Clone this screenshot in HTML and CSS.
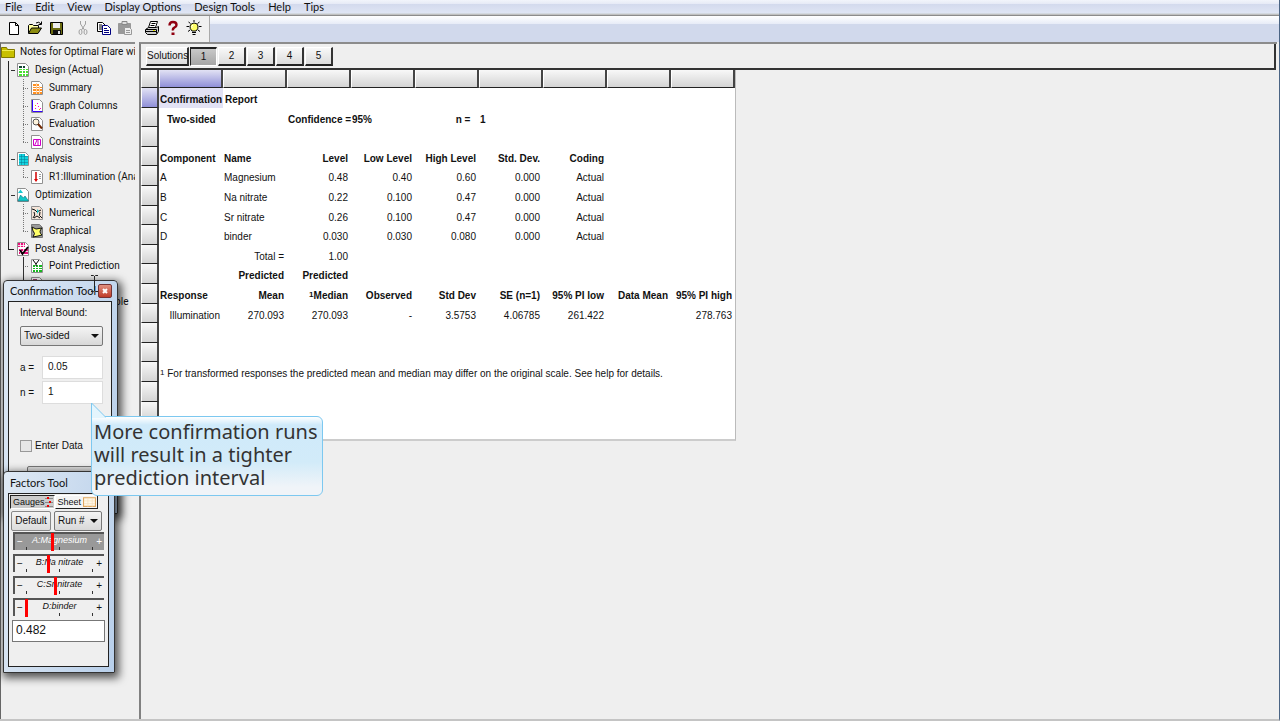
FILE: index.html
```html
<!DOCTYPE html>
<html lang="en">
    <head>
        <meta charset="utf-8">
        <title>Confirmation Report</title>
        <link rel="stylesheet" href="styles.css">
    </head>
    <body>
        <nav class="menu">
            <a href="#">File</a>
            <a href="#">Edit</a>
            <a href="#">View</a>
            <a href="#">Display Options</a>
            <a href="#">Design Tools</a>
            <a href="#">Help</a>
            <a href="#">Tips</a>
        </nav>
        <div class="toolbar">
            <div class="tools">
                <button aria-label="New"><svg viewBox="0 0 16 16"><path d="M3.5 2.500h6l3 3v9h-9zM9.500 2.500v3h3" fill="#fff" stroke="#000"/></svg></button>
                <button aria-label="Open"><svg viewBox="0 0 16 16"><path d="M1.500 13V5.500l1-1h3l1 1h5V8" fill="#ffffa0" stroke="#000"/><path d="M1.500 13.500l3-5.500h10l-3.500 5.500z" fill="#8c8c10" stroke="#000"/><path d="M9 3q3-2 5 1M14.500 1.500v3h-3" fill="none" stroke="#000"/></svg></button>
                <button aria-label="Save"><svg viewBox="0 0 16 16"><path d="M2.500 2.500h12v12h-11l-1-1z" fill="#6b6b10" stroke="#000"/><path d="M5 3h7v5H5z" fill="#eee"/><path d="M5 10h8v4H5z" fill="#111"/><path d="M10 11h2v3h-2z" fill="#ddd"/></svg></button>
                <button class="gap" aria-label="Cut"><svg viewBox="0 0 16 16" fill="none" stroke="#a0a0a0"><path d="M5.500 1v3l4 6M10.500 1v3l-4 6"/><ellipse cx="5.500" cy="12" rx="1.500" ry="2.500"/><ellipse cx="10.500" cy="12" rx="1.500" ry="2.500"/></svg></button>
                <button aria-label="Copy"><svg viewBox="0 0 16 16"><path d="M1.500 2.500h5l3 3v6h-8z" fill="#fff" stroke="#000"/><path d="M3 5h3M3 7h3M3 9h3" stroke="#000"/><path d="M6.500 5.500h5l3 3v6h-8z" fill="#fff" stroke="#000080"/><path d="M8 8.500h3M8 10.500h5M8 12.500h5" stroke="#000080"/></svg></button>
                <button aria-label="Paste"><svg viewBox="0 0 16 16"><path d="M1.500 3.500h12v10h-12z" fill="#999" stroke="#999"/><path d="M5 1.500h5v3H5z" fill="#ddd" stroke="#888"/><path d="M7.500 7.500h5l2 2v5h-7z" fill="#eee" stroke="#999"/><path d="M9 10.500h4M9 12.500h4" stroke="#999"/></svg></button>
                <button class="gap" aria-label="Print"><svg viewBox="0 0 16 16"><path d="M4.500 7.500l2-6h7l-2 6" fill="#fff" stroke="#000"/><path d="M7.500 3.500h4M6.500 5.500h4" stroke="#000"/><path d="M1.500 9.500l3-2h8l2-1v5l-2 3h-9l-2-2z" fill="#ccc" stroke="#000"/><path d="M2 9.500h10.500v4M2 11.500h10" fill="none" stroke="#000"/><path d="M9 10.500h2" stroke="#dd0"/></svg></button>
                <button aria-label="Help"><svg viewBox="0 0 16 16"><path d="M4.500 5.500q0-3.500 3.500-3.500t3.500 3q0 1.500-2 2.500T8 10.500" fill="none" stroke="#900010" stroke-width="2.400"/><path d="M6.500 12.500h3v2.500h-3z" fill="#900010"/></svg></button>
                <button aria-label="Tips"><svg viewBox="0 0 16 16"><path d="M8 0v2M2.500 2l2 1.500M13.500 2l-2 1.500M0.500 6.500h2.500M13 6.500h2.500M2 11.500l2-1.500M14 11.500l-2-1.500" stroke="#000"/><path d="M6 11Q3.500 8.500 4 6t4-3q3.500 0 4 3T10 11z" fill="#ff6" stroke="#000"/><path d="M7 5q-2 1-1 3" fill="none" stroke="#fff"/><path d="M6 12.500h4M6.500 14.500h3" stroke="#000"/></svg></button>
            </div>
        </div>
        <div class="workspace">
            <aside class="sidebar">
                <ul class="tree">
                    <li class="root"><svg viewBox="0 0 14 14"><path d="M.5 2.500h5l1 2h7v8H.5z" fill="#c8c000" stroke="#807800"/><path d="M1 5.500h12" stroke="#f0ec50"/></svg>Notes for Optimal Flare wit</li>
                    <li class="branch"><svg viewBox="0 0 14 14"><path d="M1.500.5h8l3 3v10h-11z" fill="#fff" stroke="#909090"/><path d="M3 3h3v2H3zM7 3h2v2H7z" fill="#143"/><path d="M3 6h3v1H3zM7 6h2v1H7zM10 6h2v1h-2zM3 8h3v2H3zM7 8h2v2H7zM10 8h2v2h-2zM3 11h3v2H3zM7 11h2v2H7zM10 11h2v2h-2z" fill="#48e030"/></svg>Design (Actual)</li>
                    <li class="leaf"><svg viewBox="0 0 14 14"><path d="M1.500.5h8l3 3v10h-11z" fill="#fff" stroke="#909090"/><path d="M3 3h6v2H3zM3 6h9v1H3zM3 8h9v2H3zM3 11h9v2H3z" fill="#ff9022"/><path d="M6.500 2v11M9.500 5v8" stroke="#ffd0a0"/></svg>Summary</li>
                    <li class="leaf"><svg viewBox="0 0 14 14"><path d="M1.500.5h8l3 3v10h-11z" fill="#fff" stroke="#909090"/><path d="M2.500 1v11.500h10" fill="none" stroke="#30f"/><path d="M5 9h1v1H5zM8 7h1v1H8zM7 4h1v1H7zM10 9h1v1h-1z" fill="#f0c"/><path d="M5 6h1v1H5zM9 10h1v1H9z" fill="#f80"/></svg>Graph Columns</li>
                    <li class="leaf"><svg viewBox="0 0 14 14"><path d="M1.500.5h8l3 3v10h-11z" fill="#fff" stroke="#909090"/><circle cx="6" cy="5" r="3" fill="#fff4dd" stroke="#555"/><path d="M8 7l4 4.500" stroke="#702800" stroke-width="2"/></svg>Evaluation</li>
                    <li class="leaf last"><svg viewBox="0 0 14 14"><path d="M1.500.5h8l3 3v10h-11z" fill="#fff" stroke="#909090"/><path d="M3.500 4.500h7v6h-7zM4.500 10.500L7 5M8 10V4.500" fill="none" stroke="#d000c8"/></svg>Constraints</li>
                    <li class="branch"><svg viewBox="0 0 14 14"><path d="M1.500.5h8l3 3v10h-11z" fill="#fff" stroke="#909090"/><path d="M3 2h6v2h3v9H3z" fill="#14d4e0"/><path d="M3 4.500h9M3 7.500h9M3 10.500h9M5.500 2v11M8.500 2v11" stroke="#087890" stroke-width=".5"/></svg>Analysis</li>
                    <li class="leaf last"><svg viewBox="0 0 14 14"><path d="M1.500.5h8l3 3v10h-11z" fill="#fff" stroke="#909090"/><path d="M6 2v8" stroke="#d00000" stroke-width="1.500"/><path d="M4 9h4l-2 3z" fill="#d00"/><path d="M9 4.500h2M9 6.500h2M9 8.500h2" stroke="#999"/></svg>R1:Illumination (Anal</li>
                    <li class="branch"><svg viewBox="0 0 14 14"><path d="M1.500.5h8l3 3v10h-11z" fill="#fff" stroke="#909090"/><path d="M2 13l2.500-6 3 3L9 8l3.500 5z" fill="#10c8c8" stroke="#087080" stroke-width=".6"/><path d="M2 5l2.500-3.500L7 5z" fill="#18c8d0"/></svg>Optimization</li>
                    <li class="leaf"><svg viewBox="0 0 14 14"><path d="M1.500.5h8l3 3v10h-11z" fill="#f4e4d8" stroke="#909090"/><path d="M2 3l3 1 2 2 4-2M3 12q3-3 1-6M12 12q-4-2-2-6M4 12l3-2 3 2" fill="none" stroke="#111"/><path d="M7 3l2 2-2 3z" fill="#18c8d0"/></svg>Numerical</li>
                    <li class="leaf last"><svg viewBox="0 0 14 14"><path d="M1.500.5h8l3 3v10h-11z" fill="#999" stroke="#777"/><path d="M2 3l4 2 6-1q-4 4 0 7l-4 1-5 1q3-4 0-6z" fill="#ffff68" stroke="#111"/></svg>Graphical</li>
                    <li class="branch end"><svg viewBox="0 0 14 14"><path d="M1.500.5h8l3 3v10h-11z" fill="#fff" stroke="#909090"/><path d="M2 1h7v4H2zM3 7h9v5H3z" fill="#e8107c"/><path d="M4.500 1v12M7.500 1v12M2 3.500h10M2 9.500h10" stroke="#fff" stroke-width=".8"/><path d="M4 8l2.500 4L12 5" fill="none" stroke="#000" stroke-width="1.800"/></svg>Post Analysis</li>
                    <li class="leaf solid"><svg viewBox="0 0 14 14"><path d="M1.500.5h8l3 3v10h-11z" fill="#fff" stroke="#909090"/><path d="M3 6h2v2H3zM6 6h2v2H6zM9 6h3v2H9zM3 9h2v1H3zM6 9h2v1H6zM9 9h3v1H9zM3 11h2v2H3zM6 11h2v2H6zM9 11h3v2H9z" fill="#18b820"/><path d="M3 1l3 4 3-4M6 5v2" fill="none" stroke="#000"/></svg>Point Prediction</li>
                    <li class="leaf solid"><svg viewBox="0 0 14 14"><path d="M1.500.5h8l3 3v10h-11z" fill="#fff" stroke="#909090"/><path d="M3 2h4v3H3z" fill="#a04070"/></svg></li>
                    <li class="leaf solid last"><svg viewBox="0 0 14 14"><path d="M1.500.5h8l3 3v10h-11z" fill="#fff" stroke="#909090"/></svg>Coefficients Table</li>
                </ul>
            </aside>
            <main class="report">
                <div class="solutions">
                    <button class="tab wide">Solutions</button>
                    <button class="tab pressed">1</button>
                    <button class="tab">2</button>
                    <button class="tab">3</button>
                    <button class="tab">4</button>
                    <button class="tab">5</button>
                </div>
                <div class="sheet">
                    <table>
                        <colgroup><col class="rowcol"><col span="9"></colgroup>
                        <thead>
                            <tr><th></th><th class="active"></th><th></th><th></th><th></th><th></th><th></th><th></th><th></th><th></th></tr>
                        </thead>
                        <tbody>
                            <tr class="bold"><th class="active"></th><td class="left selected">Confirmation Report</td><td colspan="8"></td></tr>
                            <tr class="bold"><th></th><td class="left indent">Two-sided</td><td></td><td class="left">Confidence =</td><td class="left">95%</td><td>n =&nbsp;&nbsp;</td><td class="left">1</td><td colspan="3"></td></tr>
                            <tr><th></th><td colspan="9"></td></tr>
                            <tr class="bold"><th></th><td class="left">Component</td><td class="left">Name</td><td>Level</td><td>Low Level</td><td>High Level</td><td>Std. Dev.</td><td>Coding</td><td colspan="2"></td></tr>
                            <tr><th></th><td class="left">A</td><td class="left">Magnesium</td><td>0.48</td><td>0.40</td><td>0.60</td><td>0.000</td><td>Actual</td><td colspan="2"></td></tr>
                            <tr><th></th><td class="left">B</td><td class="left">Na nitrate</td><td>0.22</td><td>0.100</td><td>0.47</td><td>0.000</td><td>Actual</td><td colspan="2"></td></tr>
                            <tr><th></th><td class="left">C</td><td class="left">Sr nitrate</td><td>0.26</td><td>0.100</td><td>0.47</td><td>0.000</td><td>Actual</td><td colspan="2"></td></tr>
                            <tr><th></th><td class="left">D</td><td class="left">binder</td><td>0.030</td><td>0.030</td><td>0.080</td><td>0.000</td><td>Actual</td><td colspan="2"></td></tr>
                            <tr><th></th><td></td><td>Total =</td><td>1.00</td><td colspan="6"></td></tr>
                            <tr class="bold"><th></th><td></td><td>Predicted</td><td>Predicted</td><td colspan="6"></td></tr>
                            <tr class="bold"><th></th><td class="left">Response</td><td>Mean</td><td><sup>1</sup>Median</td><td>Observed</td><td>Std Dev</td><td>SE (n=1)</td><td>95% PI low</td><td>Data Mean</td><td>95% PI high</td></tr>
                            <tr><th></th><td>Illumination</td><td>270.093</td><td>270.093</td><td>-</td><td>3.5753</td><td>4.06785</td><td>261.422</td><td></td><td>278.763</td></tr>
                            <tr><th></th><td colspan="9"></td></tr>
                            <tr><th></th><td colspan="9"></td></tr>
                            <tr><th></th><td class="left" colspan="9"><sup>1</sup> For transformed responses the predicted mean and median may differ on the original scale. See help for details.</td></tr>
                            <tr><th></th><td colspan="9"></td></tr>
                            <tr><th></th><td colspan="9"></td></tr>
                        </tbody>
                    </table>
                </div>
            </main>
        </div>

        <section class="window confirm">
            <header>Confirmation Tool<button class="close" aria-label="Close"><svg viewBox="0 0 12 12"><path d="M4 4l4 4M8 4l-4 4" stroke="#fff" stroke-width="2"/></svg></button></header>
            <div class="body">
                <label for="bound">Interval Bound:</label>
                <div class="dropdown"><select id="bound"><option>Two-sided</option></select></div>
                <div class="field"><label for="alpha">a =</label><input id="alpha" type="text" value="0.05"></div>
                <div class="field"><label for="runs">n =</label><input id="runs" type="text" value="1"></div>
                <div class="check"><input id="enter" type="checkbox"><label for="enter">Enter Data</label></div>
                <button class="plain" aria-label="Apply"></button>
            </div>
        </section>

        <section class="window factors">
            <header>Factors Tool</header>
            <div class="body">
                <div class="switch">
                    <button class="on">Gauges<svg viewBox="0 0 8 12"><path d="M0 2.500h8M0 6.500h8M0 10.500h8" stroke="#888"/><path d="M3 1v2M5 5v2M3 9v2" stroke="#e00" stroke-width="2"/></svg></button>
                    <button>Sheet<svg class="grid" viewBox="0 0 12 9"><path d="M.5.5h11v8H.5z" fill="#fff8e8" stroke="#e0a860"/><path d="M4.500 1v8M8.500 1v8M1 3.500h10M1 6h10" stroke="#f4dcb8" stroke-width=".6"/></svg></button>
                </div>
                <div class="actions">
                    <button>Default</button>
                    <div class="dropdown"><select aria-label="Run number"><option>Run #</option></select></div>
                </div>
                <div class="gauge current"><label for="ga">A:Magnesium</label><span class="minus">−</span><span class="plus">+</span><input id="ga" type="range" value="39"></div>
                <div class="gauge"><label for="gb">B:Na nitrate</label><span class="minus">−</span><span class="plus">+</span><input id="gb" type="range" value="33"></div>
                <div class="gauge"><label for="gc">C:Sr nitrate</label><span class="minus">−</span><span class="plus">+</span><input id="gc" type="range" value="44"></div>
                <div class="gauge"><label for="gd">D:binder</label><span class="minus">−</span><span class="plus">+</span><input id="gd" type="range" value="0"></div>
                <input class="value" type="text" value="0.482" aria-label="Factor value">
            </div>
        </section>

        <svg class="cursor" viewBox="0 0 9 17"><path d="M1 .5h2.500l1 1 1-1H8M4.500 1v15M1 16.500h2.500l1-1 1 1H8" fill="none" stroke="#222"/></svg>

        <div class="callout">
            <svg viewBox="0 0 15 16"><path d="M.5 16V1L15 15.500V16z" fill="#e4f5fd"/><path d="M.5 16V1L15 15.500" fill="none" stroke="#7cc8f0"/></svg>
            More confirmation runs<br>will result in a tighter<br>prediction interval
        </div>
    </body>
</html>
```

FILE: styles.css
```css
*{
    box-sizing: border-box;
}
body{
    margin: 0;
    min-height: 100vh;
    display: flex;
    flex-direction: column;
    position: relative;
    overflow: hidden;
    background: #efefef;
    color: #111;
    font: 10px/12px "Liberation Sans", Arial, sans-serif;
    border-right: 1px solid #4a6484;
    border-bottom: 2px solid #c4c4c4;
}
button, input, select{
    font: inherit;
    color: inherit;
    margin: 0;
    padding: 0;
}

/* menu and toolbar */
.menu{
    display: flex;
    gap: 13px;
    height: 16px;
    padding-left: 5px;
    line-height: 13px;
    font-family: Lato, "Open Sans", sans-serif;
    font-size: 11px;
    background: linear-gradient(#f2f5fb 0, #e6eaf6 4px, #d3daed 4px, #dfe5f4 13px, #b0bccb 13px, #f4f4f4 14px, #8c8c8c 15px);
}
.menu a{
    color: #111;
    text-decoration: none;
}
.toolbar{
    height: 26px;
    background: linear-gradient(#fff 0, #e7ecf7 8px, #d1d9ec 8px);
}
.tools{
    display: flex;
    align-items: center;
    gap: 5px;
    width: 210px;
    height: 100%;
    padding: 0 0 2px 6px;
    background: #f0f0f0;
    border-right: 1px solid #aaa;
}
.tools button{
    width: 16px;
    height: 16px;
    border: 0;
    background: none;
}
.tools .gap{
    margin-left: 6px;
}
.tools svg{
    display: block;
    width: 16px;
    height: 16px;
}

/* tree */
.workspace{
    flex: 1;
    display: flex;
    gap: 4px;
}
.sidebar{
    width: 135px;
    overflow: hidden;
    font-family: Roboto, "Liberation Sans", sans-serif;
    border-top: 2px solid #8c8c8c;
    border-left: 1px solid #666;
}
.tree{
    list-style: none;
    margin: -1px 0 0;
    padding: 0;
}
.tree li{
    display: flex;
    align-items: center;
    gap: 5px;
    height: 18px;
    white-space: nowrap;
}
.tree li:nth-child(6n){
    height: 17px;
}
.tree svg{
    flex: none;
    width: 14px;
    height: 14px;
}
.tree .branch{
    margin-left: 7px;
    padding-left: 7px;
    background: linear-gradient(#333, #333) 2px 9px / 4px 1px no-repeat;
    border-left: 1px solid #222;
}
.tree .branch.end{
    padding-left: 8px;
    border-left: 0;
    background:
        linear-gradient(#222, #222) 0 0 / 1px 9px no-repeat,
        linear-gradient(#222, #222) 0 9px / 6px 1px no-repeat;
}
.tree .leaf{
    margin-left: 7px;
    padding-left: 21px;
    border-left: 1px solid #222;
    background:
        repeating-linear-gradient(#777 0 1px, transparent 1px 2px) 14px 0 / 1px 18px no-repeat,
        repeating-linear-gradient(90deg, #777 0 1px, transparent 1px 2px) 14px 9px / 6px 1px no-repeat;
}
.tree .leaf.last{
    background-size: 1px 9px, 6px 1px;
}
.tree .leaf.solid{
    border-left-color: transparent;
    background-image:
        linear-gradient(#333, #333),
        repeating-linear-gradient(90deg, #777 0 1px, transparent 1px 2px);
}

/* report */
.report{
    flex: 1;
    min-width: 0;
    margin-right: 2px;
    border-top: 2px solid #8c8c8c;
    border-left: 2px solid #808080;
}
.solutions{
    display: flex;
    gap: 1px;
    height: 26px;
    padding: 3px 0 0 5px;
    border-right: 2px solid #333;
    border-bottom: 2px solid #333;
    margin-right: 1px;
}
.tab{
    width: 28px;
    height: 19px;
    background: linear-gradient(#f8f8f8, #dcdcdc);
    border: 1px solid #fff;
    border-right: 2px solid #333;
    border-bottom: 2px solid #222;
}
.tab.wide{
    width: 43px;
}
.tab.pressed{
    width: 27px;
    background: linear-gradient(#c8c8c8, #a6a6a6);
    border: 1px solid #fff;
    border-top: 2px solid #222;
    border-left: 1px solid #222;
}
.sheet{
    width: 595px;
    padding-bottom: 18px;
    background: #fff;
    border-right: 1px solid #bbb;
    border-bottom: 2px solid #ccc;
}
table{
    width: 594px;
    table-layout: fixed;
    border-collapse: separate;
    border-spacing: 0;
}
.rowcol{
    width: 18px;
}
th{
    padding: 0;
    background: linear-gradient(#f8f8f8, #d4d4d4);
    border-left: 1px solid #fff;
    border-right: 2px solid #444;
    border-bottom: 1px solid #222;
}
th.active{
    background: linear-gradient(#e2e2f4, #9090d8);
}
thead tr{
    height: 18px;
}
tbody tr{
    height: 20px;
}
tbody tr:nth-child(5n+2), tbody tr:nth-child(5n+4){
    height: 19px;
}
td{
    padding: 4px 3px 0 1px;
    text-align: right;
    white-space: nowrap;
}
td.left{
    text-align: left;
}
td.indent{
    padding-left: 8px;
}
td.selected{
    background: #e2e2f4;
}
sup{
    font-size: 8px;
    line-height: 0;
    vertical-align: 2px;
}
.bold{
    font-weight: bold;
}

/* floating tools */
.window{
    position: absolute;
    left: 3px;
    display: flex;
    flex-direction: column;
    padding: 0 5px 5px 4px;
    background: linear-gradient(100deg, #dfe9f4, #b8cfea);
    border: 1px solid #333;
    border-radius: 4px 4px 0 0;
    box-shadow: 2px 3px 8px 2px rgba(0, 0, 0, .65);
}
.window header{
    display: flex;
    justify-content: space-between;
    align-items: center;
    height: 20px;
    padding-left: 2px;
    white-space: nowrap;
    font-family: Lato, "Open Sans", sans-serif;
    font-size: 11px;
}
.window .body{
    flex: 1;
    background: #efefef;
    border: 1px solid #222;
}
.close{
    flex: none;
    width: 14px;
    height: 14px;
    background: linear-gradient(#e09080, #c03c28);
    border: 1px solid #733;
    border-radius: 2px;
}
.close svg{
    display: block;
}
.confirm{
    top: 280px;
    width: 115px;
    height: 234px;
}
.confirm .body{
    padding: 5px 8px 0 11px;
}
.dropdown{
    position: relative;
}
.dropdown select{
    display: block;
    width: 100%;
    height: 20px;
    padding-left: 3px;
    appearance: none;
    background: linear-gradient(#f4f4f4, #d8d8d8);
    border: 1px solid #777;
    border-radius: 2px;
}
.dropdown::after{
    content: "";
    position: absolute;
    right: 4px;
    top: 8px;
    border: 4px solid transparent;
    border-top-color: #111;
    border-bottom: 0;
}
.confirm .dropdown{
    margin: 7px 0 10px;
}
.field{
    display: flex;
    align-items: center;
    justify-content: space-between;
    margin-bottom: 2px;
}
.field input{
    width: 61px;
    height: 23px;
    padding: 0 0 3px 5px;
    background: #fff;
    border: 1px solid #ddd;
}
.check{
    display: flex;
    align-items: center;
    gap: 3px;
    margin: 36px 0 14px;
}
.check input{
    appearance: none;
    width: 12px;
    height: 12px;
    background: #e6e6e6;
    border: 1px solid #999;
}
.plain{
    display: block;
    width: 68px;
    height: 20px;
    margin-left: 7px;
    background: #ddd;
    border: 1px solid #777;
    border-radius: 2px;
}
.factors{
    top: 471px;
    width: 112px;
    height: 202px;
}
.factors header{
    height: 21px;
}
.factors .body{
    padding: 1px 4px 0 4px;
}
.switch{
    display: flex;
    margin: 0 6px 2px -3px;
}
.switch button{
    flex: 1;
    display: flex;
    align-items: center;
    justify-content: space-between;
    height: 14px;
    padding: 0 1px 0 2px;
    font-size: 9px;
    background: #f4f4f4;
    border: 1px solid #fff;
    border-right-color: #222;
    border-bottom-color: #222;
}
.switch button.on{
    background: #ccc;
    border-color: #222 #fff #fff #222;
}
.switch svg{
    width: 8px;
    height: 12px;
}
.switch svg.grid{
    width: 13px;
    height: 10px;
}
.actions{
    display: flex;
    justify-content: space-between;
    margin: 0 2px 1px -2px;
}
.actions button{
    width: 40px;
    height: 20px;
    background: linear-gradient(#f4f4f4, #dcdcdc);
    border: 1px solid #888;
    border-radius: 2px;
}
.actions .dropdown{
    width: 48px;
}
.gauge{
    display: grid;
    height: 18px;
    margin-bottom: 4px;
    background:
        linear-gradient(#333, #333) 11px 100% / 1px 3px no-repeat,
        linear-gradient(#333, #333) 44px 100% / 1px 3px no-repeat,
        linear-gradient(#333, #333) 77px 100% / 1px 3px no-repeat,
        #efefef;
    border-top: 2px solid #555;
    border-left: 2px solid #555;
    font-size: 9px;
}
.gauge.current{
    background-color: #999;
    color: #fff;
}
.gauge > *{
    grid-area: 1 / 1;
}
.gauge label{
    font-style: italic;
    text-align: center;
}
.gauge span{
    margin: 2px 2px 0;
    font-size: 10px;
}
.plus{
    text-align: right;
}
.gauge input{
    appearance: none;
    width: 69px;
    height: 16px;
    margin-left: 10px;
    background: none;
}
.gauge input::-webkit-slider-thumb{
    appearance: none;
    width: 3px;
    height: 18px;
    background: #f00;
}
.value{
    width: 93px;
    height: 22px;
    margin-left: -1px;
    padding: 0 0 2px 3px;
    font-size: 12px;
    background: #fff;
    border: 1px solid #777;
}

.cursor{
    position: absolute;
    left: 90px;
    top: 275px;
    width: 9px;
    height: 17px;
}
.callout{
    position: absolute;
    left: 91px;
    top: 416px;
    padding: 3px 5px 6px 2px;
    white-space: nowrap;
    font: 20px/23px "Noto Sans", "Open Sans", sans-serif;
    color: #333;
    background: linear-gradient(#fff 0, #cfeafa 8px, #d2ebf9 45px, #f0f4f8 90%);
    border: 1px solid #7cc8f0;
    border-radius: 0 6px 6px 6px;
}
.callout svg{
    position: absolute;
    left: -1px;
    top: -15px;
    width: 15px;
    height: 16px;
}
```
